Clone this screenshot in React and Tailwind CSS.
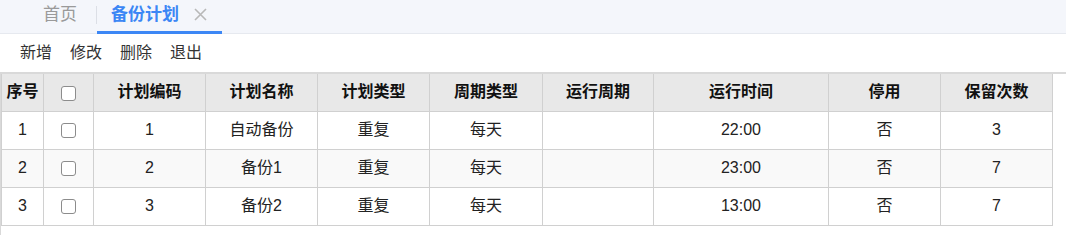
import { useState } from 'react';

const columns = [
  { key: 'idx', title: '序号', w: 'w-[42px]' },
  { key: 'chk', title: '', w: 'w-[50px]' },
  { key: 'code', title: '计划编码', w: 'w-[112px]' },
  { key: 'name', title: '计划名称', w: 'w-[112px]' },
  { key: 'type', title: '计划类型', w: 'w-[112px]' },
  { key: 'cycle', title: '周期类型', w: 'w-[113px]' },
  { key: 'period', title: '运行周期', w: 'w-[111px]' },
  { key: 'time', title: '运行时间', w: 'w-[175px]' },
  { key: 'off', title: '停用', w: 'w-[112px]' },
  { key: 'keep', title: '保留次数', w: 'w-[112px]' },
];

const rows = [
  { code: '1', name: '自动备份', type: '重复', cycle: '每天', period: '', time: '22:00', off: '否', keep: '3' },
  { code: '2', name: '备份1', type: '重复', cycle: '每天', period: '', time: '23:00', off: '否', keep: '7' },
  { code: '3', name: '备份2', type: '重复', cycle: '每天', period: '', time: '13:00', off: '否', keep: '7' },
];

function Box({ checked, onChange }) {
  return (
    <span
      onClick={onChange}
      className={
        'inline-block w-[15px] h-[15px] rounded-[3px] border border-[#8c8c8c] align-middle cursor-pointer ' +
        (checked ? 'bg-[#3c87f5] border-[#3c87f5]' : 'bg-white')
      }
    />
  );
}

export default function App() {
  const [sel, setSel] = useState({});
  const allChecked = rows.every((r) => sel[r.code]);

  return (
    <div className="w-[1066px] h-[235px] bg-white overflow-hidden text-[#222]" style={{ fontFamily: '"Liberation Sans", "Noto Sans CJK SC", sans-serif' }}>
      {/* 标签栏 */}
      <div className="h-[34px] bg-[#f4f6fb] border-b border-[#e6e9ef] flex items-stretch">
        <div className="w-[96px] flex items-center pl-[43px] text-[17px] text-[#9a9a9a] pb-[4px]">首页</div>
        <div className="w-px h-[18px] bg-[#dcdfe6] mt-[6px]" />
        <div className="w-[125px] flex items-center pl-[14px] pb-[1px] border-b-[3px] border-[#3c87f5] -mb-px">
          <span className="text-[17px] font-bold text-[#3c87f5]">备份计划</span>
          <svg className="ml-[15px] mb-[1px]" width="13" height="13" viewBox="0 0 13 13">
            <path d="M1 1 L12 12 M12 1 L1 12" stroke="#b8b8b8" strokeWidth="1.6" fill="none" />
          </svg>
        </div>
      </div>

      {/* 工具栏 */}
      <div className="h-[38px] flex items-center gap-[18px] pl-[20px] text-[16px] text-[#333]">
        <span>新增</span>
        <span>修改</span>
        <span>删除</span>
        <span>退出</span>
      </div>

      {/* 表格 */}
      <div className="border-t-[2px] border-l border-[#d9d9d9] h-[200px]">
        <table className="border-collapse table-fixed w-[1051px] text-[16px]">
          <thead>
            <tr className="h-[37px] bg-[#e8e8e8]">
              {columns.map((c) => (
                <th key={c.key} className={c.w + ' border border-[#d0d0d0] border-t-0 font-bold text-[#111] text-center p-0'}>
                  {c.key === 'chk' ? (
                    <Box
                      checked={allChecked}
                      onChange={() => {
                        const n = {};
                        rows.forEach((r) => (n[r.code] = !allChecked));
                        setSel(n);
                      }}
                    />
                  ) : (
                    c.title
                  )}
                </th>
              ))}
            </tr>
          </thead>
          <tbody>
            {rows.map((r, i) => (
              <tr key={r.code} className={'h-[38px] ' + (i % 2 === 1 ? 'bg-[#f9f9f9]' : 'bg-white')}>
                <td className="border border-[#d0d0d0] text-center p-0">{i + 1}</td>
                <td className="border border-[#d0d0d0] text-center p-0">
                  <Box checked={!!sel[r.code]} onChange={() => setSel({ ...sel, [r.code]: !sel[r.code] })} />
                </td>
                <td className="border border-[#d0d0d0] text-center p-0">{r.code}</td>
                <td className="border border-[#d0d0d0] text-center p-0">{r.name}</td>
                <td className="border border-[#d0d0d0] text-center p-0">{r.type}</td>
                <td className="border border-[#d0d0d0] text-center p-0">{r.cycle}</td>
                <td className="border border-[#d0d0d0] text-center p-0">{r.period}</td>
                <td className="border border-[#d0d0d0] text-center p-0">{r.time}</td>
                <td className="border border-[#d0d0d0] text-center p-0">{r.off}</td>
                <td className="border border-[#d0d0d0] text-center p-0">{r.keep}</td>
              </tr>
            ))}
          </tbody>
        </table>
      </div>
    </div>
  );
}
